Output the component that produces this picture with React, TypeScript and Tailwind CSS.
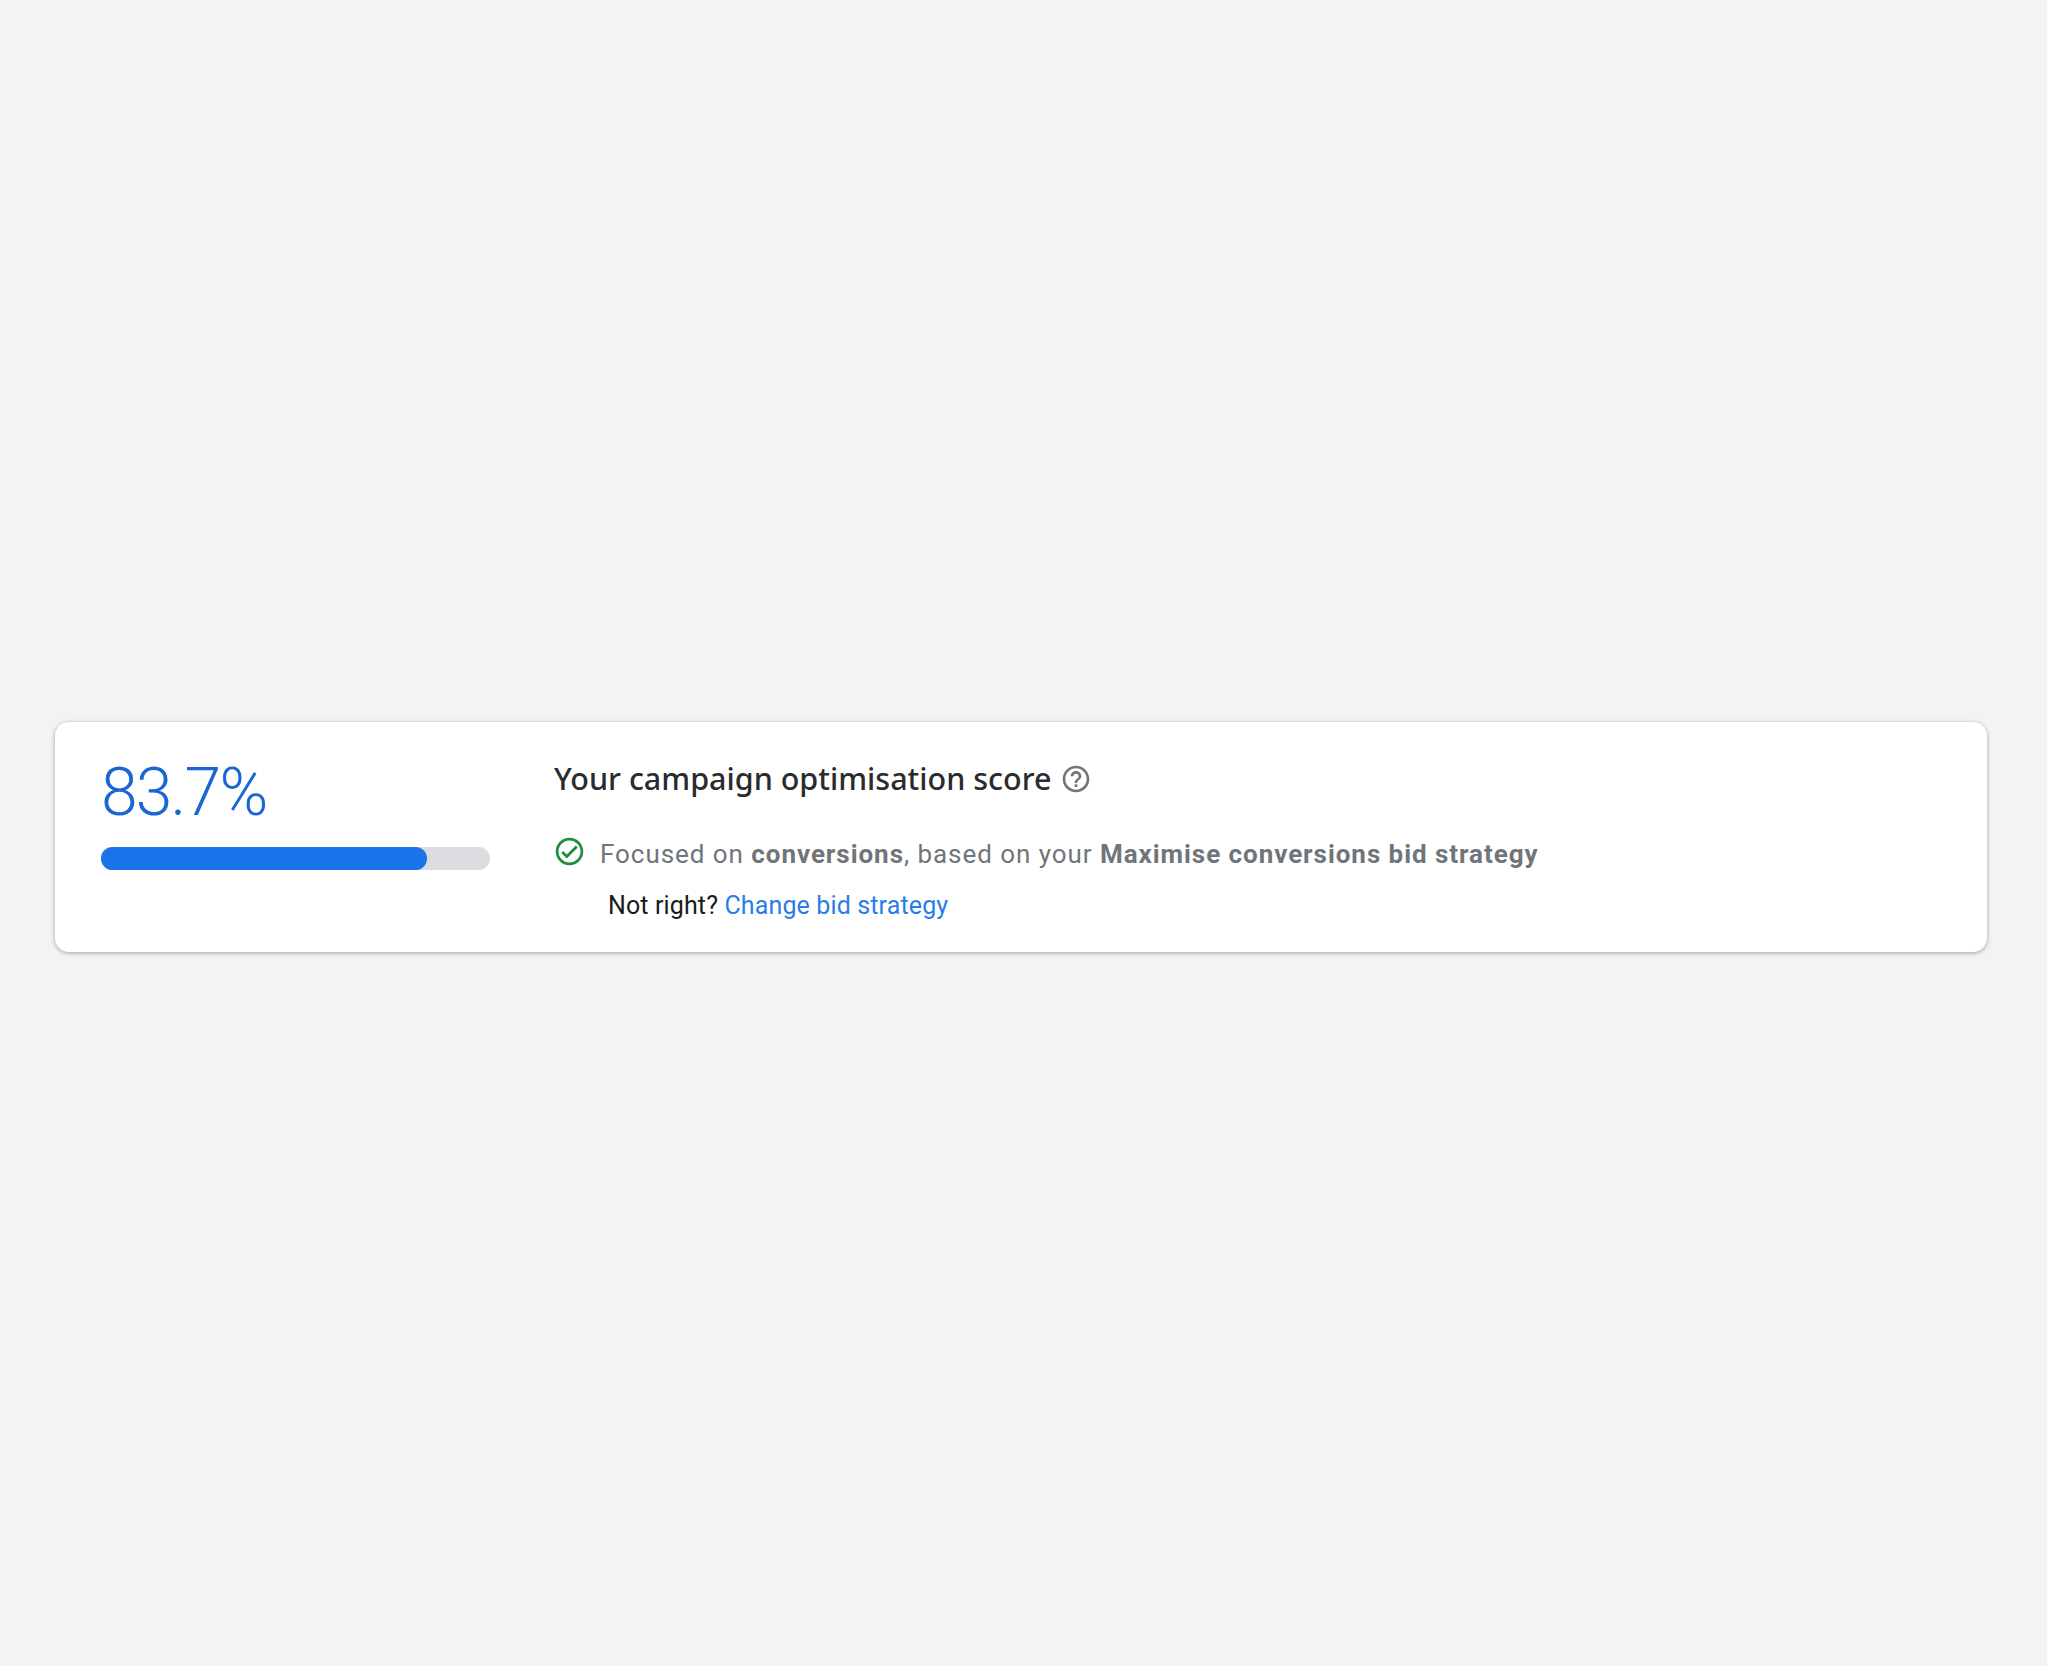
import React from 'react';

const CheckIcon = () => (
  <svg viewBox="0 0 24 24" className="w-[33px] h-[33px] shrink-0 mb-[5px] -ml-px fill-[#1e8e3e]">
    <path d="M12 2C6.48 2 2 6.48 2 12s4.48 10 10 10 10-4.48 10-10S17.52 2 12 2zm0 18c-4.41 0-8-3.59-8-8s3.59-8 8-8 8 3.59 8 8-3.59 8-8 8zm4.59-12.42L10 14.17l-2.59-2.58L6 13l4 4 8-8-1.41-1.42z" />
  </svg>
);

const HelpIcon = () => (
  <svg viewBox="0 0 24 24" className="w-8 h-8 shrink-0 fill-[#757575]">
    <path d="M11 18h2v-2h-2v2zm1-16C6.48 2 2 6.48 2 12s4.48 10 10 10 10-4.48 10-10S17.52 2 12 2zm0 18c-4.41 0-8-3.59-8-8s3.59-8 8-8 8 3.59 8 8-3.59 8-8 8zm0-14c-2.21 0-4 1.79-4 4h2c0-1.1.9-2 2-2s2 .9 2 2c0 2-3 1.75-3 5h2c0-2.25 3-2.5 3-5 0-2.21-1.79-4-4-4z" />
  </svg>
);

export default function App() {
  return (
    <div className="min-h-[1666px] bg-[#f1f3f4] flex flex-col justify-center pl-[55px] pr-[60px] pt-[8px] font-['Roboto',sans-serif]">
      <div className="h-[230px] bg-white rounded-[14px] shadow-[0_1px_4px_rgba(60,64,67,0.45)] flex pl-[46px] pt-[35px]">
        <div className="w-[389px] shrink-0">
          <div className="text-[66px] leading-[72px] tracking-[-1.8px] font-light text-[#1a66d2]">83.7%</div>
          <div className="mt-[18px] h-[23px] rounded-full bg-[#dadce0]">
            <div className="h-full w-[83.7%] rounded-full bg-[#1a73e8]" />
          </div>
        </div>
        <div className="ml-[64px] -mt-[2px]">
          <div className="flex items-center gap-[9px] h-[48px] text-[#2a2b2e]">
            <span className="text-[30.5px] font-['Noto_Sans',sans-serif] font-medium">Your campaign optimisation score</span>
            <HelpIcon />
          </div>
          <div className="mt-[32px] flex items-center text-[26px] leading-[36px] tracking-[0.95px] text-[#70757a]">
            <CheckIcon />
            <span className="ml-[14px]">
              Focused on <b className="font-bold">conversions</b>, based on your <b className="font-bold">Maximise conversions bid strategy</b>
            </span>
          </div>
          <div className="mt-[15px] ml-[54px] text-[25px] leading-[36px] tracking-[0.13px] text-[#1a1a1a]">
            Not right? <a className="text-[#2a7de6]">Change bid strategy</a>
          </div>
        </div>
      </div>
    </div>
  );
}
